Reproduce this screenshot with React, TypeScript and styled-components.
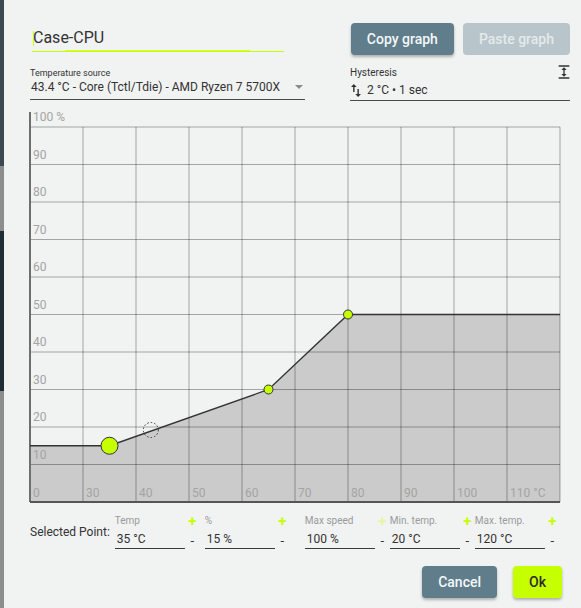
import React from "react";
import styled, { createGlobalStyle } from "styled-components";

const lime = "#c6ff00";
const slate = "#607d8b";
const ink = "#333333";

const GlobalStyle = createGlobalStyle`
    html, body {
        margin: 0;
        padding: 0;
    }
    body {
        background-color: #f1f2f2;
        font-family: Roboto, "Liberation Sans", sans-serif;
    }
`;

const Page = styled.div`
    display: flex;
    width: 581px;
    height: 608px;
    overflow: hidden;
`;

// strip of the app window visible behind the dialog
const Backdrop = styled.div`
    flex: 0 0 4px;
    display: flex;
    flex-direction: column;
`;

const BackdropBand = styled.div<{ $height?: number; $color: string }>`
    flex: ${props => (props.$height ? `0 0 ${props.$height}px` : "1")};
    background-color: ${props => props.$color};
`;

const Dialog = styled.div`
    flex: 1;
    display: flex;
    flex-direction: column;
    padding: 23px 11px 0 26px;
    background-color: #f1f2f2;
    color: ${ink};
`;

const Header = styled.div`
    display: flex;
    align-items: flex-start;
    justify-content: space-between;
    height: 32px;
`;

const TitleField = styled.div`
    position: relative;
    width: 251px;
    height: 28px;
    margin-left: 2px;
    font-size: 16px;
    line-height: 30px;
    padding-left: 1px;
    border-bottom: 1px solid ${lime};
    &::before {
        content: "";
        position: absolute;
        left: 1px;
        top: 8px;
        width: 1px;
        height: 15px;
        background-color: ${lime};
    }
    &::after {
        content: "";
        position: absolute;
        left: 33px;
        bottom: 0;
        width: 185px;
        height: 1px;
        background-color: #d4ff2a;
    }
`;

const ButtonGroup = styled.div`
    display: flex;
    gap: 9px;
`;

const Button = styled.button<{ $variant: "slate" | "lime" | "disabled" }>`
    height: 32px;
    padding: 0 16px;
    border: none;
    border-radius: 4px;
    font-family: Roboto, "Liberation Sans", sans-serif;
    font-size: 14px;
    font-weight: 500;
    cursor: pointer;
    background-color: ${props =>
        props.$variant === "slate"
            ? slate
            : props.$variant === "lime"
            ? lime
            : "#b8c5cb"};
    color: ${props =>
        props.$variant === "slate"
            ? "#f4f7f8"
            : props.$variant === "lime"
            ? "#2b2b2b"
            : "#e4eaec"};
    box-shadow: ${props =>
        props.$variant === "disabled"
            ? "none"
            : "0 2px 3px rgba(0, 0, 0, 0.28)"};
`;

const SourceRow = styled.div`
    display: grid;
    grid-template-columns: 275px 1fr;
    column-gap: 45px;
    margin-top: 12px;
`;

const Field = styled.div`
    display: flex;
    flex-direction: column;
`;

const FieldLabel = styled.div<{ $small?: boolean }>`
    display: flex;
    align-items: center;
    justify-content: space-between;
    height: 12px;
    font-size: ${props => (props.$small ? 9 : 10)}px;
    line-height: 12px;
`;

const FieldValue = styled.div<{ $tall?: boolean }>`
    display: flex;
    align-items: flex-start;
    gap: 6px;
    height: ${props => (props.$tall ? 21 : 20)}px;
    font-size: 12px;
    line-height: ${props => (props.$tall ? 23 : 16)}px;
    border-bottom: 1px solid #4a4a4a;
`;

const SourceText = styled.span`
    flex: 1;
    padding-left: 1px;
    white-space: nowrap;
`;

const DropArrow = styled.svg`
    flex-shrink: 0;
    width: 8px;
    height: 4px;
    margin: 6px 2px 0 0;
`;

const ExpandIcon = styled.svg`
    width: 16px;
    height: 16px;
    margin: -3px -2px 0 0;
`;

const SwapIcon = styled.svg`
    flex-shrink: 0;
    width: 10px;
    height: 13px;
    margin-top: 5px;
    margin-left: 1px;
`;

const ChartSvg = styled.svg`
    display: block;
    width: 536px;
    height: 398px;
    margin-top: 7px;
    overflow: visible;
    font-family: Roboto, "Liberation Sans", sans-serif;
`;

const PointRow = styled.div`
    display: flex;
    align-items: center;
    margin-top: 8px;
`;

const PointCaption = styled.div`
    font-size: 12px;
    margin-right: 5px;
    white-space: nowrap;
`;

const PointGroup = styled.div<{ $gap: number; $offset: number }>`
    display: flex;
    gap: ${props => props.$gap}px;
    margin-left: ${props => props.$offset}px;
`;

const Spin = styled.div`
    display: grid;
    grid-template-columns: 70px 15px;
    grid-template-rows: 13px 22px;
`;

const SpinLabel = styled.div`
    font-size: 10px;
    line-height: 13px;
    color: #9a9a9a;
    white-space: nowrap;
`;

const SpinValue = styled.div`
    box-sizing: border-box;
    height: 22px;
    padding: 4px 0 0 2px;
    font-size: 12px;
    line-height: 16px;
    border-bottom: 1px solid #3a3a3a;
`;

const SpinStep = styled.div<{ $plus?: boolean; $disabled?: boolean }>`
    text-align: center;
    font-size: ${props => (props.$plus ? 15 : 13)}px;
    font-weight: ${props => (props.$plus ? 700 : 400)};
    line-height: ${props => (props.$plus ? 13 : 20)}px;
    padding-top: ${props => (props.$plus ? 1 : 4)}px;
    color: ${props =>
        props.$plus ? (props.$disabled ? "#e3f7a0" : lime) : ink};
`;

const Footer = styled.div`
    display: flex;
    justify-content: flex-end;
    gap: 16px;
    margin: 17px 8px 0 0;
`;

// curve geometry: 20..120 °C across, 0..100 % up
const X0 = 30;
const X1 = 560;
const Y0 = 502;
const Y1 = 127;
const tempToX = (t: number) => X0 + (t - 20) * 5.3;
const pctToY = (p: number) => Y0 - p * 3.75;

const curve = [
    { t: 35, p: 15 },
    { t: 65, p: 30 },
    { t: 80, p: 50 },
];

const xLabels = ["0", "30", "40", "50", "60", "70", "80", "90", "100", "110 °C"];

function FanChart() {
    const linePoints = [
        [X0, pctToY(curve[0].p)],
        ...curve.map(c => [tempToX(c.t), pctToY(c.p)]),
        [X1, pctToY(curve[curve.length - 1].p)],
    ];
    const area = [...linePoints, [X1, Y0], [X0, Y0]]
        .map(([x, y]) => `${x},${y}`)
        .join(" ");
    const line = linePoints.map(([x, y]) => `${x},${y}`).join(" ");
    const rows = Array.from({ length: 11 }, (_, i) => Y1 + i * 37.5);
    const cols = Array.from({ length: 11 }, (_, i) => X0 + i * 53);

    return (
        <ChartSvg viewBox="30 108 536 398">
            <polygon points={area} fill="#cbcbcb" />
            {rows.map(y => (
                <line
                    key={`r${y}`}
                    x1={X0}
                    x2={X1}
                    y1={y}
                    y2={y}
                    stroke="rgba(0,0,0,0.32)"
                    strokeWidth={1}
                />
            ))}
            {cols.map(x => (
                <line
                    key={`c${x}`}
                    x1={x}
                    x2={x}
                    y1={Y1}
                    y2={Y0}
                    stroke="rgba(0,0,0,0.32)"
                    strokeWidth={1}
                />
            ))}
            <line x1={X0} x2={X0} y1={112} y2={Y0} stroke="#6f6f6f" strokeWidth={2} />
            <line x1={X0} x2={X1} y1={Y0} y2={Y0} stroke="#555" strokeWidth={2} />
            {Array.from({ length: 10 }, (_, i) => 100 - i * 10).map(p => (
                <text
                    key={`y${p}`}
                    x={33}
                    y={pctToY(p) - 6}
                    fontSize={12}
                    fill="#a4a4a4"
                >
                    {p === 100 ? "100 %" : p}
                </text>
            ))}
            {xLabels.map((label, i) => (
                <text
                    key={`x${label}`}
                    x={X0 + i * 53 + 3}
                    y={497}
                    fontSize={12}
                    fill="#a4a4a4"
                >
                    {label}
                </text>
            ))}
            <polyline points={line} fill="none" stroke="#333" strokeWidth={1.4} />
            <circle
                cx={tempToX(42.8)}
                cy={430}
                r={7.5}
                fill="none"
                stroke="#333"
                strokeWidth={1}
                strokeDasharray="1.5 2"
            />
            {curve.map((c, i) => (
                <circle
                    key={c.t}
                    cx={tempToX(c.t)}
                    cy={pctToY(c.p)}
                    r={i === 0 ? 8.5 : 4.5}
                    fill={lime}
                    stroke="#333"
                    strokeWidth={1}
                />
            ))}
        </ChartSvg>
    );
}

function SpinField({
    label,
    value,
    plusDisabled,
}: {
    label: string;
    value: string;
    plusDisabled?: boolean;
}) {
    return (
        <Spin>
            <SpinLabel>{label}</SpinLabel>
            <SpinStep $plus $disabled={plusDisabled}>
                +
            </SpinStep>
            <SpinValue>{value}</SpinValue>
            <SpinStep>-</SpinStep>
        </Spin>
    );
}

export default function App() {
    return (
        <Page>
            <GlobalStyle />
            <Backdrop>
                <BackdropBand $height={166} $color="#3a4a50" />
                <BackdropBand $height={65} $color="#8d8d8d" />
                <BackdropBand $height={160} $color="#1f2e35" />
                <BackdropBand $color="#8c8c8c" />
            </Backdrop>
            <Dialog>
                <Header>
                    <TitleField>Case-CPU</TitleField>
                    <ButtonGroup>
                        <Button $variant="slate">Copy graph</Button>
                        <Button $variant="disabled">Paste graph</Button>
                    </ButtonGroup>
                </Header>
                <SourceRow>
                    <Field>
                        <FieldLabel $small>Temperature source</FieldLabel>
                        <FieldValue>
                            <SourceText>
                                43.4 °C - Core (Tctl/Tdie) - AMD Ryzen 7 5700X
                            </SourceText>
                            <DropArrow viewBox="0 0 8 4">
                                <path d="M0 0h8L4 4z" fill="#8a8a8a" />
                            </DropArrow>
                        </FieldValue>
                    </Field>
                    <Field>
                        <FieldLabel>
                            Hysteresis
                            <ExpandIcon viewBox="0 0 24 24">
                                <path
                                    d="M4 20h16v2H4zM4 2h16v2H4zm9 7h3l-4-4-4 4h3v6H8l4 4 4-4h-3z"
                                    fill="#333"
                                />
                            </ExpandIcon>
                        </FieldLabel>
                        <FieldValue $tall>
                            <SwapIcon viewBox="5 3 14 18">
                                <path
                                    d="M16 17.01V10h-2v7.01h-3L15 21l4-3.99h-3zM9 3L5 6.99h3V14h2V6.99h3L9 3z"
                                    fill="#333"
                                />
                            </SwapIcon>
                            2 °C • 1 sec
                        </FieldValue>
                    </Field>
                </SourceRow>
                <FanChart />
                <PointRow>
                    <PointCaption>Selected Point:</PointCaption>
                    <PointGroup $gap={5} $offset={0}>
                        <SpinField label="Temp" value="35 °C" />
                        <SpinField label="%" value="15 %" />
                    </PointGroup>
                    <PointGroup $gap={0} $offset={15}>
                        <SpinField label="Max speed" value="100 %" plusDisabled />
                        <SpinField label="Min. temp." value="20 °C" />
                        <SpinField label="Max. temp." value="120 °C" />
                    </PointGroup>
                </PointRow>
                <Footer>
                    <Button $variant="slate">Cancel</Button>
                    <Button $variant="lime">Ok</Button>
                </Footer>
            </Dialog>
        </Page>
    );
}
